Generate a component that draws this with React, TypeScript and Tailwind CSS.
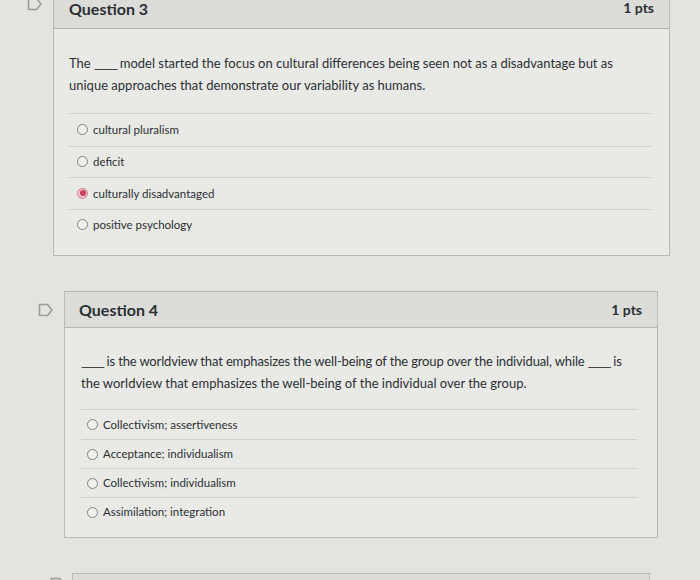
import React from "react";

type Option = { label: string; selected?: boolean };

function FlagIcon() {
  return (
    <svg width="16" height="14" viewBox="0 0 16 14" fill="none">
      <path
        d="M1.5 1.5H9.5L14 7L9.5 12.5H1.5Z"
        stroke="#9b9b99"
        strokeWidth="1.6"
        strokeLinejoin="round"
      />
    </svg>
  );
}

function Radio({ selected }: { selected?: boolean }) {
  if (selected) {
    return (
      <span className="flex h-[11px] w-[11px] shrink-0 items-center justify-center rounded-full border border-[#d9778b] bg-[#f2c6cf]">
        <span className="h-[6px] w-[6px] rounded-full bg-[#c8435f]" />
      </span>
    );
  }
  return <span className="h-[11px] w-[11px] shrink-0 rounded-full border border-[#7d8286] bg-[#efefec]" />;
}

function QuestionCard({
  title,
  points,
  text,
  options,
  compact,
}: {
  title: string;
  points: string;
  text: React.ReactNode;
  options: Option[];
  compact?: boolean;
}) {
  return (
    <div className="flex-1 border border-[#b9bab6] bg-[#e9e9e6]">
      <div
        className={
          compact
            ? "flex h-[36px] items-center justify-between border-b border-[#b4b5b1] bg-[#dcdcd9] pl-[14px] pr-[15px]"
            : "flex h-[40px] items-center justify-between border-b border-[#b4b5b1] bg-[#dcdcd9] pl-[15px] pr-[15px]"
        }
      >
        <span className="text-[16px] font-bold text-[#2b3034]">{title}</span>
        <span className={compact ? "text-[14px] font-bold text-[#2b3034]" : "-mt-[3px] text-[14px] font-bold text-[#2b3034]"}>
          {points}
        </span>
      </div>
      <div className={compact ? "pb-[11px] pl-[16px] pr-[20px] pt-[22px]" : "pb-[15px] pl-[15px] pr-[18px] pt-[23px]"}>
        <p className="whitespace-nowrap text-[13px] leading-[22px] text-[#2b3034]">{text}</p>
        <div className={compact ? "mt-[15px] border-t border-[#cfcfcc]" : "mt-[17px] border-t border-[#cfcfcc]"}>
          {options.map((o, i) => (
            <div
              key={o.label}
              className={
                (compact ? "flex h-[29px] items-center gap-[5px] pl-[6px] " : "flex h-[31.5px] items-center gap-[5px] pl-[8px] ") +
                (i > 0 ? "border-t border-[#cfcfcc]" : "")
              }
            >
              <Radio selected={o.selected} />
              <span className="text-[11.5px] text-[#2b3034]">{o.label}</span>
            </div>
          ))}
        </div>
      </div>
    </div>
  );
}

const blank = <span className="tracking-[-1.5px]">_____</span>;

export default function App() {
  return (
    <div
      className="flex h-[580px] w-[700px] flex-col overflow-hidden bg-[#e3e3e0]"
      style={{ fontFamily: "Lato, 'Noto Sans', sans-serif" }}
    >
      <div className="-mt-[12px] flex items-start gap-[10px] pl-[27px] pr-[30px]">
        <div className="mt-[9px]">
          <FlagIcon />
        </div>
        <QuestionCard
          title="Question 3"
          points="1 pts"
          text={
            <>
              The {blank} model started the focus on cultural differences being seen not as a disadvantage but as
              <br />
              unique approaches that demonstrate our variability as humans.
            </>
          }
          options={[
            { label: "cultural pluralism" },
            { label: "deficit" },
            { label: "culturally disadvantaged", selected: true },
            { label: "positive psychology" },
          ]}
        />
      </div>

      <div className="mt-[35px] flex items-start gap-[10px] pl-[38px] pr-[42px]">
        <div className="mt-[12px]">
          <FlagIcon />
        </div>
        <QuestionCard
          compact
          title="Question 4"
          points="1 pts"
          text={
            <>
              <span className="tracking-[-0.15px]">
                {blank} is the worldview that emphasizes the well-being of the group over the individual, while {blank} is
              </span>
              <br />
              the worldview that emphasizes the well-being of the individual over the group.
            </>
          }
          options={[
            { label: "Collectivism; assertiveness" },
            { label: "Acceptance; individualism" },
            { label: "Collectivism; individualism" },
            { label: "Assimilation; integration" },
          ]}
        />
      </div>

      <div className="mt-[35px] flex items-start gap-[6px] pl-[50px] pr-[50px]">
        <div className="mt-[4px]">
          <FlagIcon />
        </div>
        <div className="h-[40px] flex-1 border border-[#b9bab6] bg-[#dcdcd9]" />
      </div>
    </div>
  );
}
